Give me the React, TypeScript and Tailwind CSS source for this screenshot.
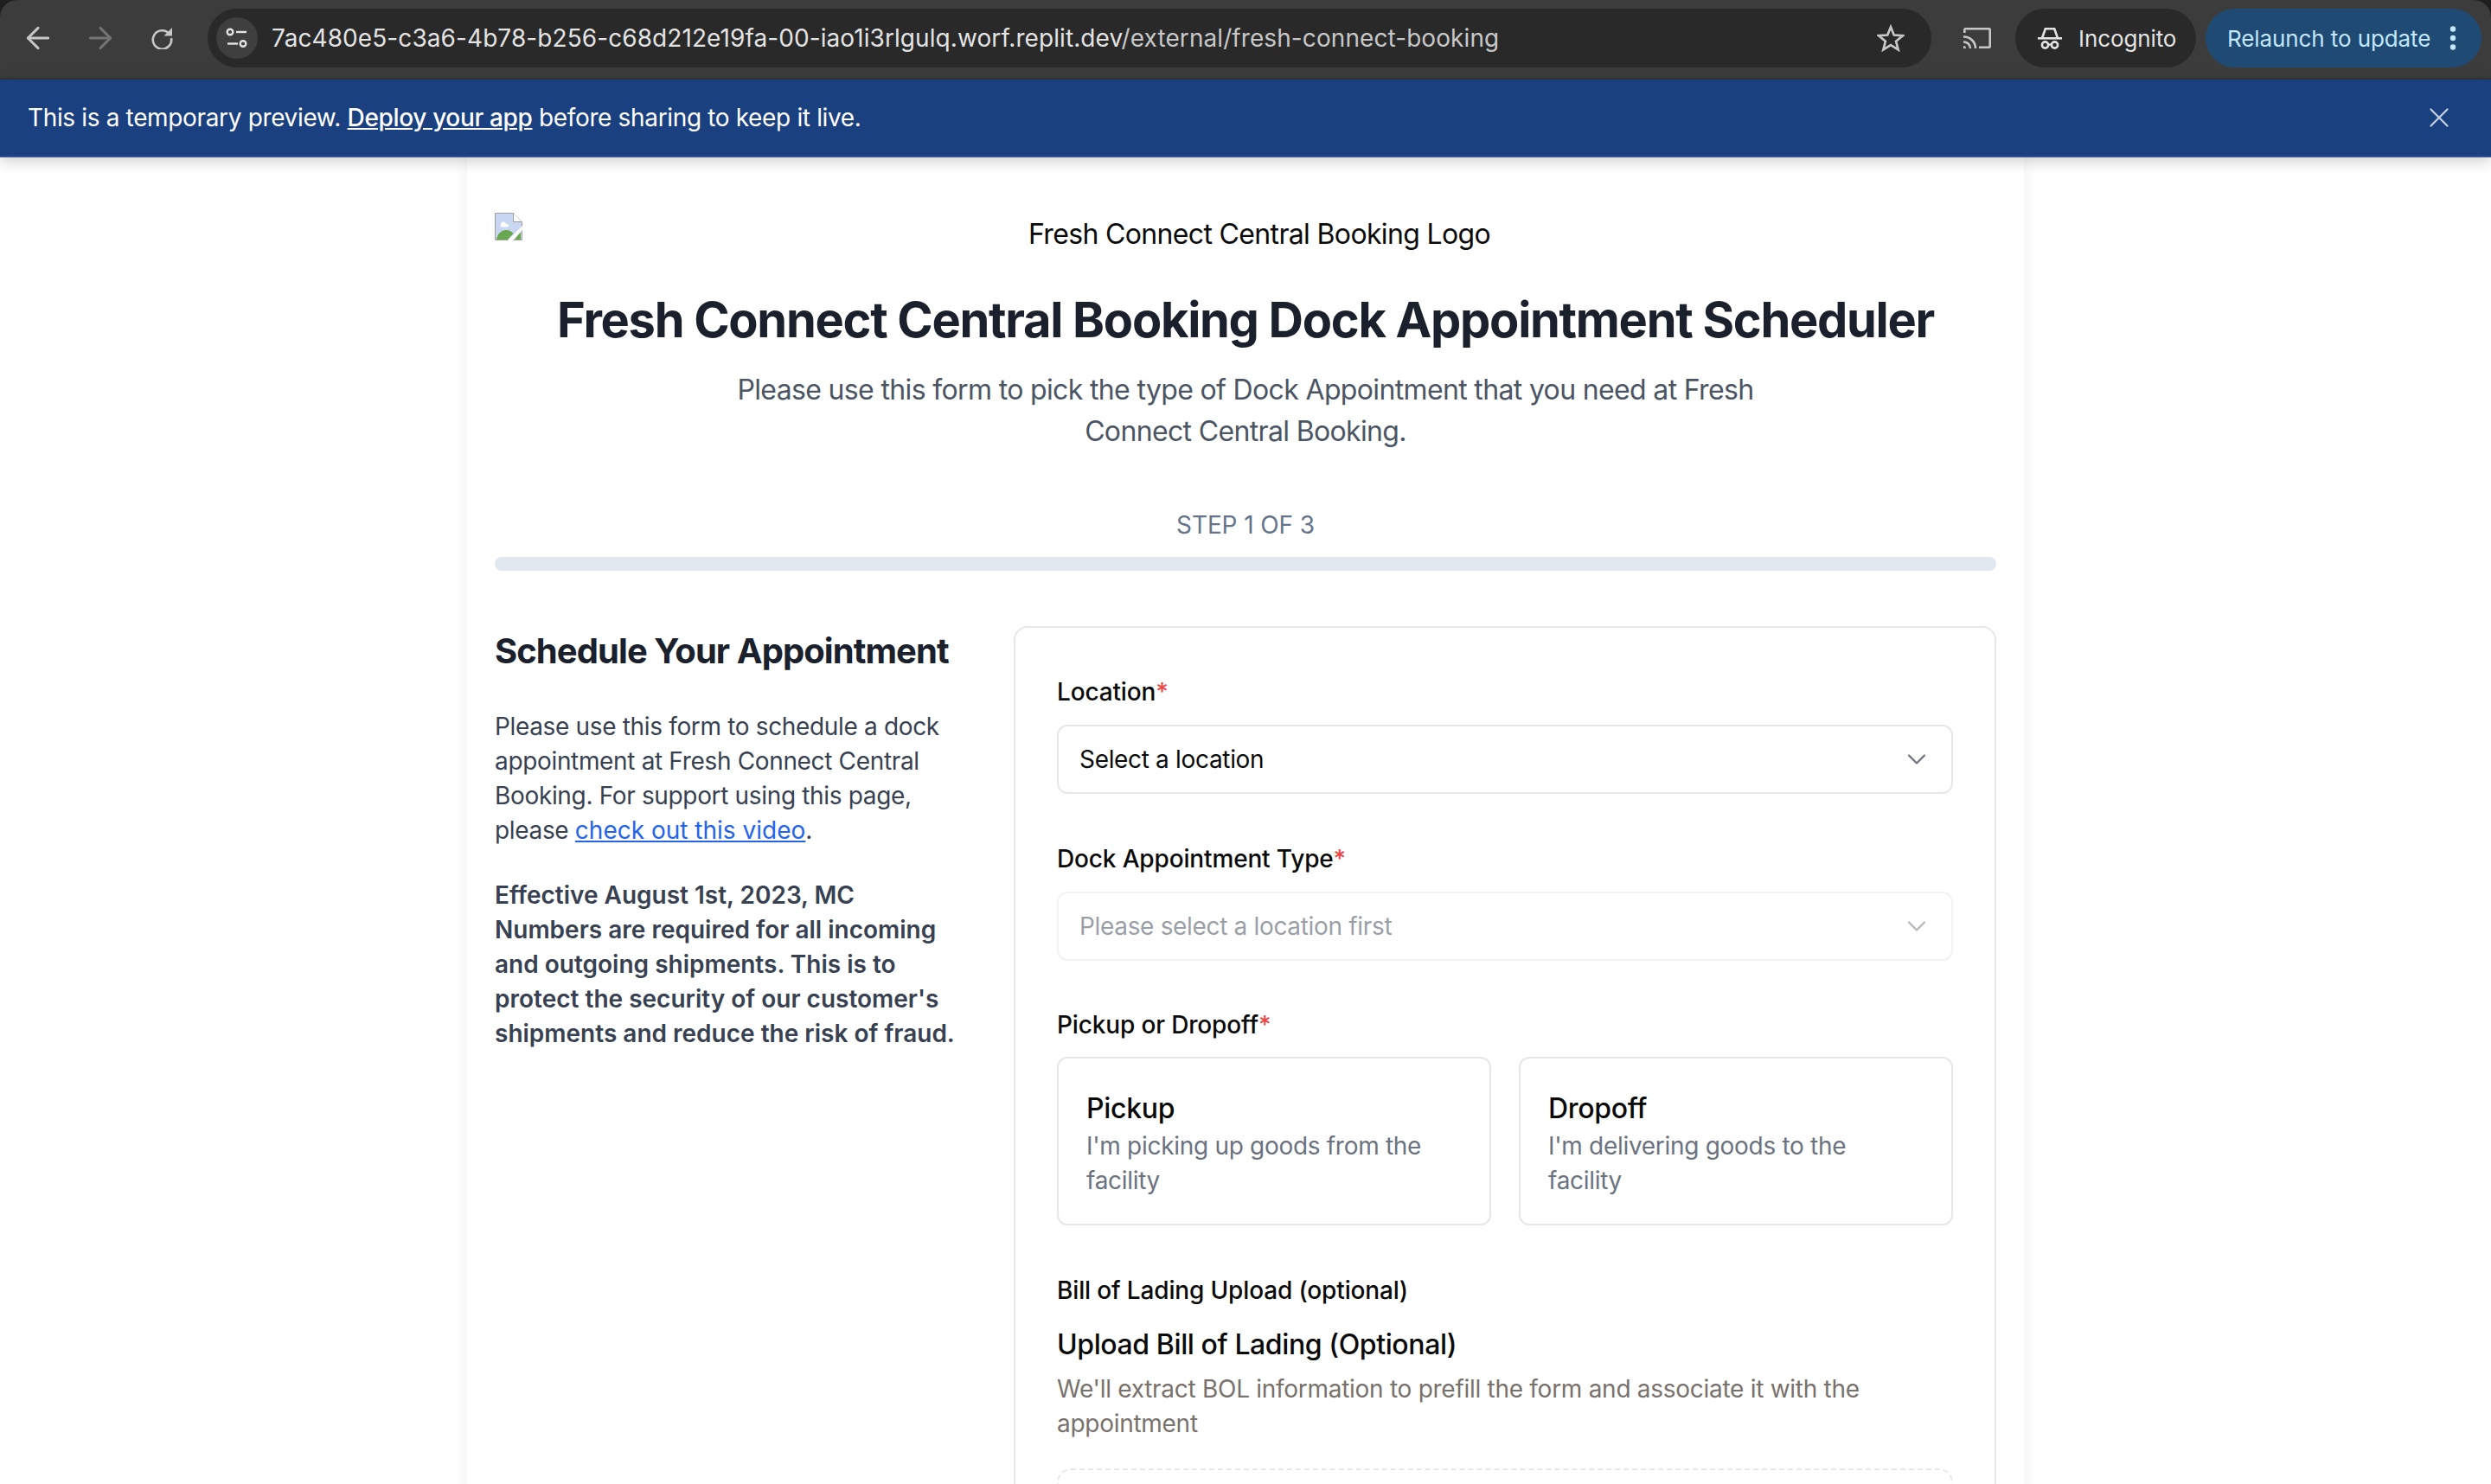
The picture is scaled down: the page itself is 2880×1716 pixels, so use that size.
import { ChevronDown, X, ArrowLeft, ArrowRight } from "lucide-react";

const ReloadIcon = () => (
  <svg width="26" height="26" viewBox="0 0 26 26" fill="none">
    <path d="M22 8.500A10.700 10.700 0 1 0 24 13" stroke="#c7c7c7" strokeWidth="2.600" />
    <path d="M25 1v9.500h-9.500z" fill="#c7c7c7" />
  </svg>
);

const SiteInfoIcon = () => (
  <svg width="28" height="28" viewBox="0 0 28 28" fill="none" stroke="#e3e3e3" strokeWidth="2.400">
    <circle cx="6" cy="7" r="3.300" />
    <path d="M13 7h12" />
    <path d="M3 20.500h12" />
    <circle cx="21" cy="20.500" r="3.300" />
  </svg>
);

const StarIcon = () => (
  <svg width="32" height="32" viewBox="0 0 30 30" fill="none" stroke="#c7c7c7" strokeWidth="2.500">
    <path d="M15 3l3.500 8.700 9.500.700-7.300 6 2.400 9.200L15 22.500l-8.100 5.100 2.400-9.200-7.300-6 9.500-.7z" />
  </svg>
);

const CastIcon = () => (
  <svg width="32" height="24" viewBox="0 0 32 24" fill="none" stroke="#c7c7c7" strokeWidth="2.600">
    <path d="M1.300 6V2.300a1 1 0 0 1 1-1h27.400a1 1 0 0 1 1 1v19.400a1 1 0 0 1-1 1H18" />
    <path d="M0 10.500A13.500 13.500 0 0 1 14 24" />
    <path d="M0 16.500A7.500 7.500 0 0 1 8 24" />
    <path d="M0 21a3 3 0 0 1 3 3H0z" fill="#c7c7c7" stroke="none" />
  </svg>
);

const IncognitoIcon = () => (
  <svg width="28" height="26" viewBox="0 0 28 26" fill="none" stroke="#e3e3e3">
    <path d="M5 13 8.800 2.300h10.400L23 13" strokeWidth="2.600" />
    <path d="M0 13.300h28" strokeWidth="2.600" />
    <circle cx="8.500" cy="21" r="3.600" strokeWidth="2.600" />
    <circle cx="19.500" cy="21" r="3.600" strokeWidth="2.600" />
    <path d="M12 20.500h4" strokeWidth="2.400" />
  </svg>
);

const BrokenImageIcon = () => (
  <svg width="32" height="32" viewBox="0 0 32 32">
    <path d="M0.500 0.500h21l10 10v21h-31z" fill="#c9d7f2" stroke="#a0a0a0" />
    <path d="M21.500 0.500v10h10" fill="#fff" stroke="#a0a0a0" />
    <path d="M7 14a3 3 0 0 1 6-1h1.500a1.700 1.700 0 0 1 0 3.500H7a1.800 1.800 0 0 1 0-2.500z" fill="#fff" />
    <path d="M2 31c1-7 6-11 11-11 4 0 7 2 8.500 4L15 31z" fill="#6aa84f" />
    <path d="M14 33l18-18v5L20 33z" fill="#fff" />
    <path d="M26 27l4-4.500V31h-7z" fill="#6aa84f" />
  </svg>
);

const Req = () => <span className="text-[#ef4444]">*</span>;

const SelectBox = ({ text, disabled }: { text: string; disabled?: boolean }) => (
  <div
    className={`flex h-20 items-center justify-between rounded-xl border-2 border-[#e5e7eb] pl-6 pr-[22px] text-[28px] tracking-[-0.33px] ${
      disabled ? "opacity-50 text-[#374151]" : "text-[#0a0a0a]"
    }`}
  >
    <span>{text}</span>
    <ChevronDown size={36} strokeWidth={1.500} className="text-[#6b7280]" />
  </div>
);

const ChoiceCard = ({ title, desc }: { title: string; desc: string }) => (
  <div className="rounded-xl border-2 border-[#e5e7eb] px-8 pb-[30px] pt-[34px]">
    <div className="text-[32px] font-medium leading-12 tracking-[-0.3px] text-[#0a0a0a]">{title}</div>
    <div className="mt-[-1px] text-[28px] leading-10 tracking-[-0.3px] text-[#6b7280]">{desc}</div>
  </div>
);

export default function App() {
  return (
    <div className="h-[1716px] w-[2880px] overflow-hidden bg-white font-['Inter',sans-serif]">
      {/* browser toolbar */}
      <div className="bg-[#1f1f1f]">
        <div className="flex h-[92px] items-start rounded-t-[20px] border-b-2 border-[#333333] bg-[#3c3c3c] pt-2.5">
          <div className="flex h-[68px] w-[240px] items-center pl-[24px] text-[#c7c7c7]">
            <ArrowLeft size={40} strokeWidth={1.800} />
            <ArrowRight size={40} strokeWidth={1.800} className="ml-[32px] text-[#757575]" />
            <div className="ml-[38px]">
              <ReloadIcon />
            </div>
          </div>
          <div className="flex h-[68px] w-[1993px] items-center rounded-full bg-[#292929] pl-2.5 pr-[31px]">
            <div className="flex size-12 items-center justify-center rounded-full bg-[#3f3f3f]">
              <SiteInfoIcon />
            </div>
            <div className="ml-4 flex-1 text-[28px] tracking-[0.08px] text-[#e3e3e3]">
              7ac480e5-c3a6-4b78-b256-c68d212e19fa-00-iao1i3rlgulq.worf.replit.dev
              <span className="text-[#c7c7c7]">/external/fresh-connect-booking</span>
            </div>
            <StarIcon />
          </div>
          <div className="ml-[37px] flex h-[68px] items-center">
            <CastIcon />
          </div>
          <div className="ml-[28px] flex h-[68px] w-[209px] items-center gap-[19px] rounded-full bg-[#292929] pl-[26px] text-[26px] tracking-[-0.1px] text-[#e3e3e3]">
            <IncognitoIcon />
            <span>Incognito</span>
          </div>
          <div className="ml-[11px] flex h-[68px] w-[319px] items-center justify-between rounded-full bg-[#1f4a73] pl-[25px] pr-[29px] text-[26px] tracking-[-0.1px] text-[#c2e7ff]">
            <span>Relaunch to update</span>
            <svg width="8" height="28" viewBox="0 0 8 28" fill="#c2e7ff">
              <circle cx="4" cy="3.500" r="3.200" />
              <circle cx="4" cy="14" r="3.200" />
              <circle cx="4" cy="24.500" r="3.200" />
            </svg>
          </div>
        </div>
      </div>

      {/* preview banner */}
      <div className="relative flex h-[90px] items-center justify-between border-b-2 border-[#2f5191] bg-[#1a4080] pl-8 pr-[41px] text-[28px] tracking-[-0.35px] text-white shadow-[0_4px_16px_rgba(0,0,0,0.2)]">
        <span>
          This is a temporary preview. <span className="font-medium underline">Deploy your app</span> before sharing to keep it live.
        </span>
        <X size={38} strokeWidth={1.400} className="text-[#c5cfe2]" />
      </div>

      {/* page */}
      <div className="mx-auto w-[1800px] bg-white p-8 pt-16 shadow-[0_0_16px_rgba(0,0,0,0.07)]">
        <div className="relative mb-10 h-12 pl-8 text-center text-[32px] leading-12 tracking-[-0.65px] text-[#0a0a0a]">
          <div className="absolute left-0 top-0">
            <BrokenImageIcon />
          </div>
          <span className="relative top-px">Fresh Connect Central Booking Logo</span>
        </div>
        <h1 className="mb-[21px] text-center text-[56px] font-bold leading-[72px] tracking-[-1.3px] text-[#1a202c]">
          Fresh Connect Central Booking Dock Appointment Scheduler
        </h1>
        <p className="mx-auto w-[1200px] text-center text-[32px] leading-12 tracking-[-0.65px] text-[#4b5563]">
          Please use this form to pick the type of Dock Appointment that you need at Fresh Connect Central Booking.
        </p>
        <div className="mt-16 text-center text-[28px] uppercase leading-10 tracking-[-0.1px] text-[#64748b]">Step 1 of 3</div>
        <div className="mt-[17px] h-4 rounded-full bg-[#e2e8f0]" />

        <div className="mt-16 grid grid-cols-3 gap-16">
          <div className="pt-px">
            <h2 className="text-[40px] font-bold leading-14 tracking-[-0.93px] text-[#1a202c]">Schedule Your Appointment</h2>
            <p className="mt-[39px] text-[28px] leading-10 tracking-[-0.34px] text-[#374151]">
              Please use this form to schedule a dock appointment at Fresh Connect Central Booking. For support using this page, please{" "}
              <span className="tracking-normal text-[#2563eb] underline">check out this video</span>.
            </p>
            <p className="mt-[35px] text-[28px] font-semibold leading-10 text-[#374151]">
              Effective August 1st, 2023, MC Numbers are required for all incoming and outgoing shipments. This is to protect the security of our customer's shipments and reduce the risk of fraud.
            </p>
          </div>
          <div className="col-span-2 rounded-2xl border-2 border-[#e5e7eb] px-12 pt-[54px]">
            <label className="block text-[28px] font-medium leading-10 tracking-[-0.15px] text-[#0a0a0a]">
              Location<Req />
            </label>
            <div className="mt-[18px]">
              <SelectBox text="Select a location" />
            </div>
            <label className="mt-[55px] block text-[28px] font-medium leading-10 tracking-[-0.15px] text-[#0a0a0a]">
              Dock Appointment Type<Req />
            </label>
            <div className="mt-[18px]">
              <SelectBox text="Please select a location first" disabled />
            </div>
            <label className="mt-[54px] block text-[28px] font-medium leading-10 tracking-[-0.15px] text-[#0a0a0a]">
              Pickup or Dropoff<Req />
            </label>
            <div className="mt-[17px] grid grid-cols-2 gap-8">
              <ChoiceCard title="Pickup" desc="I'm picking up goods from the facility" />
              <ChoiceCard title="Dropoff" desc="I'm delivering goods to the facility" />
            </div>
            <label className="mt-[55px] block text-[28px] font-medium leading-10 tracking-[-0.15px] text-[#0a0a0a]">
              Bill of Lading Upload (optional)
            </label>
            <div className="mt-[19px] text-[32px] font-medium leading-12 tracking-[-0.4px] text-[#0a0a0a]">Upload Bill of Lading (Optional)</div>
            <p className="mt-[7px] text-[28px] leading-10 tracking-[-0.28px] text-[#78716c]">
              We'll extract BOL information to prefill the form and associate it with the appointment
            </p>
            <div className="mt-8 h-[300px] rounded-2xl border-2 border-dashed border-[#e5e7eb]" />
          </div>
        </div>
      </div>
    </div>
  );
}
